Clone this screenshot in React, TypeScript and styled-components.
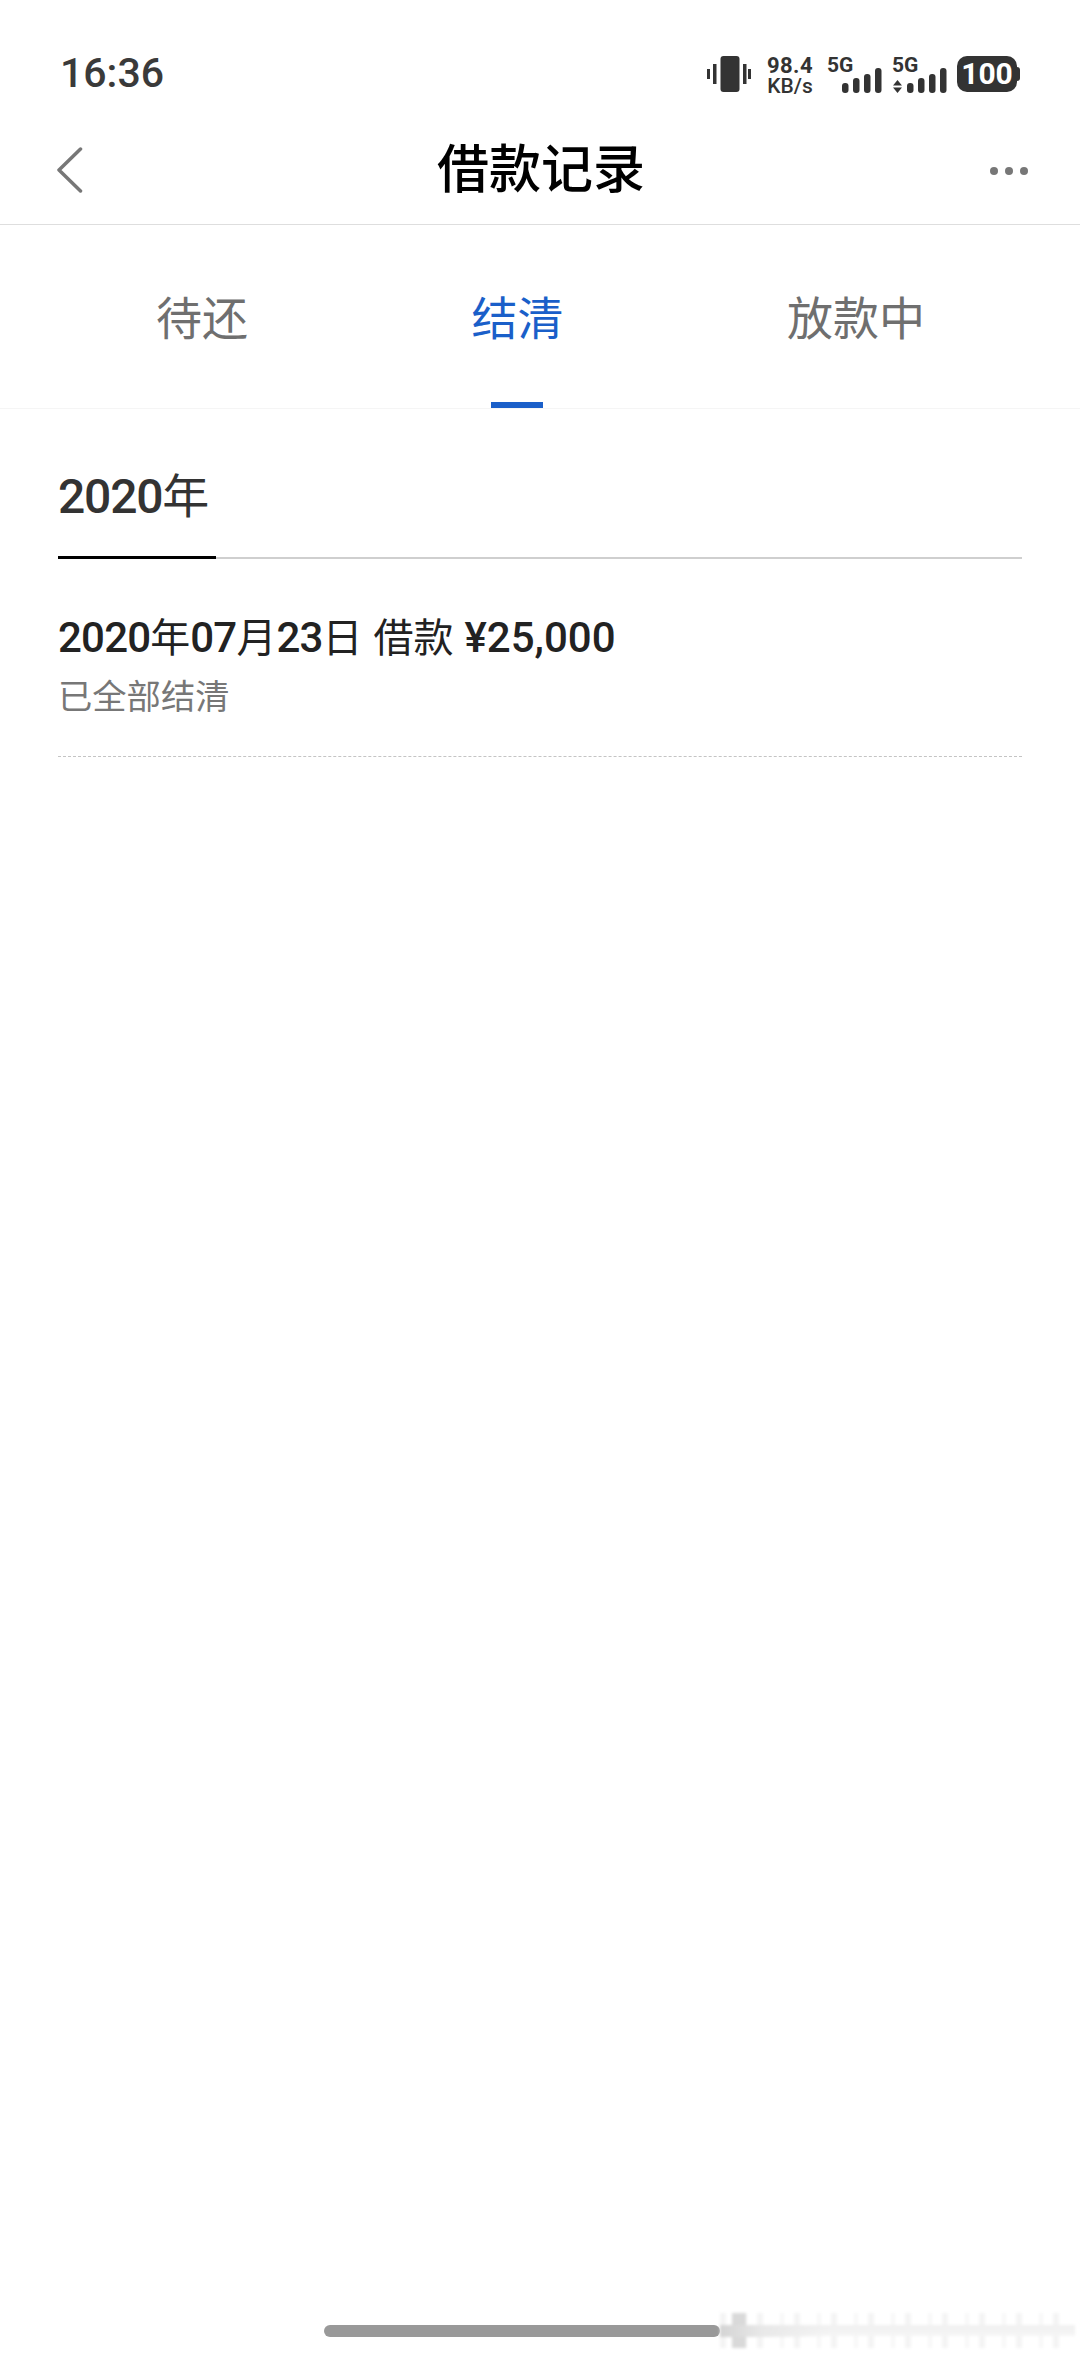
import styled, { createGlobalStyle } from 'styled-components';

const FONT = `Roboto, "Noto Sans CJK SC", sans-serif`;

const GlobalStyle = createGlobalStyle`
  html, body {
    margin: 0;
    padding: 0;
    background: #fff;
  }
  body {
    font-family: ${FONT};
  }
`;

const TABS = [
  { label: '待还', active: false },
  { label: '结清', active: true },
  { label: '放款中', active: false },
];

function VibrateIcon() {
  return (
    <svg width="44" height="36" viewBox="0 0 44 36" fill="#333">
      <rect x="13.5" y="0" width="19" height="36" rx="3" />
      <rect x="0" y="13" width="3" height="10" />
      <rect x="6" y="8" width="3.5" height="20" />
      <rect x="36" y="8" width="3.5" height="20" />
      <rect x="41" y="13" width="3" height="10" />
    </svg>
  );
}

function SignalBars({ arrows }: { arrows?: boolean }) {
  return (
    <SignalSvg width="54" height="25" viewBox="0 0 54 25" fill="#333">
      {arrows && (
        <>
          <path d="M0 17.5 L4.5 12 L9 17.5 Z" />
          <path d="M0 19.5 L9 19.5 L4.5 25 Z" />
        </>
      )}
      <rect x="14" y="15" width="6.5" height="10" rx="3" />
      <rect x="25" y="10" width="6.5" height="15" rx="3" />
      <rect x="36" y="6" width="6.5" height="19" rx="3" />
      <rect x="47" y="0" width="6.5" height="25" rx="3" />
    </SignalSvg>
  );
}

export default function App() {
  return (
    <Page>
      <GlobalStyle />
      <StatusBar>
        <Clock>16:36</Clock>
        <StatusIcons>
          <VibrateIcon />
          <Speed>
            <SpeedValue>98.4</SpeedValue>
            <SpeedUnit>KB/s</SpeedUnit>
          </Speed>
          <Network>
            <NetworkLabel>5G</NetworkLabel>
            <SignalBars />
          </Network>
          <Network>
            <NetworkLabel>5G</NetworkLabel>
            <SignalBars arrows />
          </Network>
          <Battery>
            <BatteryBody>100</BatteryBody>
            <BatteryNub />
          </Battery>
        </StatusIcons>
      </StatusBar>

      <NavBar>
        <BackIcon width="26" height="46" viewBox="0 0 26 46" fill="none">
          <path d="M23.5 2 L2 23 L23.5 44" stroke="#777" strokeWidth="3.5" strokeLinecap="round" strokeLinejoin="round" />
        </BackIcon>
        <NavTitle>借款记录</NavTitle>
        <MoreDots>
          <Dot />
          <Dot />
          <Dot />
        </MoreDots>
      </NavBar>

      <TabBar>
        {TABS.map((tab) => (
          <Tab key={tab.label} $active={tab.active}>
            {tab.label}
            {tab.active && <TabIndicator />}
          </Tab>
        ))}
      </TabBar>

      <Content>
        <YearHeader>
          <YearTitle>
            <YearDigits>2020</YearDigits>年
          </YearTitle>
        </YearHeader>
        <RecordRow>
          <RecordTitle>
            <Num>2020</Num>年<Num>07</Num>月<Num>23</Num>日 借款 <Price>¥25,000</Price>
          </RecordTitle>
          <RecordStatus>已全部结清</RecordStatus>
        </RecordRow>
      </Content>

      <HomeArea>
        <HomeBar />
        <HomeSmear />
      </HomeArea>
    </Page>
  );
}

const Page = styled.div`
  width: 1080px;
  height: 2358px;
  display: flex;
  flex-direction: column;
  overflow: hidden;
  background: #fff;
`;

const StatusBar = styled.div`
  height: 120px;
  box-sizing: border-box;
  padding: 55px 60px 0;
  display: flex;
  justify-content: space-between;
  align-items: flex-start;
`;

const Clock = styled.div`
  font-size: 41px;
  font-weight: 500;
  line-height: 36px;
  color: #3a3a3a;
`;

const StatusIcons = styled.div`
  display: flex;
  align-items: flex-start;
  height: 37px;
  padding-top: 1px;
`;

const Speed = styled.div`
  width: 48px;
  margin: 0 14px 0 15px;
  display: flex;
  flex-direction: column;
  align-items: center;
  color: #333;
`;

const SpeedValue = styled.div`
  font-size: 22px;
  font-weight: 700;
  line-height: 19px;
  letter-spacing: 0.5px;
`;

const SpeedUnit = styled.div`
  font-size: 21px;
  font-weight: 500;
  line-height: 18px;
  margin-top: 2px;
`;

const Network = styled.div`
  position: relative;
  width: 54px;
  height: 37px;
  margin-right: 11px;
`;

const NetworkLabel = styled.span`
  position: absolute;
  top: 1px;
  left: -1px;
  font-size: 21px;
  font-weight: 700;
  line-height: 17px;
  color: #333;
`;

const SignalSvg = styled.svg`
  position: absolute;
  right: 0;
  bottom: 0;
`;

const Battery = styled.div`
  display: flex;
  align-items: center;
  height: 36px;
  margin-left: -1px;
`;

const BatteryBody = styled.div`
  width: 60px;
  height: 36px;
  border-radius: 10px;
  background: #333;
  color: #fff;
  font-size: 30px;
  font-weight: 700;
  line-height: 36px;
  text-align: center;
`;

const BatteryNub = styled.div`
  width: 3px;
  height: 14px;
  border-radius: 0 3px 3px 0;
  background: #333;
`;

const NavBar = styled.div`
  height: 105px;
  box-sizing: border-box;
  padding: 0 52px 3px 57px;
  display: flex;
  align-items: center;
  justify-content: space-between;
  border-bottom: 1.5px solid #dedede;
`;

const BackIcon = styled.svg`
  margin-bottom: 2px;
`;

const NavTitle = styled.div`
  font-size: 52px;
  font-weight: 500;
  line-height: 60px;
  color: #000;
  margin-left: 9px;
`;

const MoreDots = styled.div`
  display: flex;
  gap: 7px;
`;

const Dot = styled.span`
  width: 8px;
  height: 8px;
  border-radius: 50%;
  background: #777;
`;

const TabBar = styled.div`
  height: 184px;
  box-sizing: border-box;
  padding: 63px 155px 0 156px;
  display: flex;
  justify-content: space-between;
  align-items: flex-start;
  border-bottom: 1px solid #f5f5f5;
`;

const Tab = styled.div<{ $active: boolean }>`
  position: relative;
  height: 120px;
  font-size: 46px;
  line-height: 62px;
  color: ${(p) => (p.$active ? '#1a5fc9' : '#6f6f6f')};
`;

const TabIndicator = styled.div`
  position: absolute;
  left: 50%;
  bottom: 0;
  width: 52px;
  height: 6px;
  margin-left: -27px;
  background: #1a5fc9;
`;

const Content = styled.div`
  padding: 0 58px;
  flex: 1;
`;

const YearHeader = styled.div`
  height: 150px;
  box-sizing: border-box;
  padding-top: 58px;
  border-bottom: 2px solid #cfcfcf;
`;

const YearTitle = styled.div`
  width: 158px;
  height: 92px;
  box-sizing: border-box;
  margin-bottom: -2px;
  border-bottom: 3px solid #000;
  font-size: 47px;
  line-height: 60px;
  color: #333;
  white-space: nowrap;
`;

const YearDigits = styled.span`
  font-size: 48px;
  font-weight: 500;
  letter-spacing: -1.2px;
`;

const RecordRow = styled.div`
  padding-top: 54px;
  height: 198px;
  box-sizing: border-box;
  border-bottom: 1.5px dashed #c4c4c4;
`;

const RecordTitle = styled.div`
  font-size: 40px;
  line-height: 50px;
  word-spacing: 1px;
  color: #222;
  white-space: nowrap;
`;

const Num = styled.span`
  font-size: 42px;
  font-weight: 500;
  letter-spacing: -0.8px;
`;

const Price = styled(Num)`
  letter-spacing: 0;
`;

const RecordStatus = styled.div`
  font-size: 34.3px;
  line-height: 44px;
  margin-top: 11px;
  color: #777;
`;

const HomeArea = styled.div`
  height: 33px;
  padding-left: 324px;
  display: flex;
  align-items: flex-start;
`;

const HomeBar = styled.div`
  width: 396px;
  height: 12px;
  border-radius: 6px;
  background: #999;
`;

const HomeSmear = styled.div`
  width: 355px;
  height: 35px;
  margin-top: -12px;
  filter: blur(1.5px);
  background:
    linear-gradient(90deg, #d4d4d4 0, #e8e8e8 12%, #fff0 30%) 0 12px / 100% 12px no-repeat,
    linear-gradient(90deg, #d9d9d9 0 4%, #fff0 4% 100%) 12px 0 / 100% 100% no-repeat,
    linear-gradient(#fff0 34%, #f0f0f0 36%, #f5f5f5 64%, #fff0 66%),
    repeating-linear-gradient(90deg, #f4f4f4 0 6px, #fff 6px 23px, #f7f7f7 23px 27px, #fff 27px 37px);
`;
